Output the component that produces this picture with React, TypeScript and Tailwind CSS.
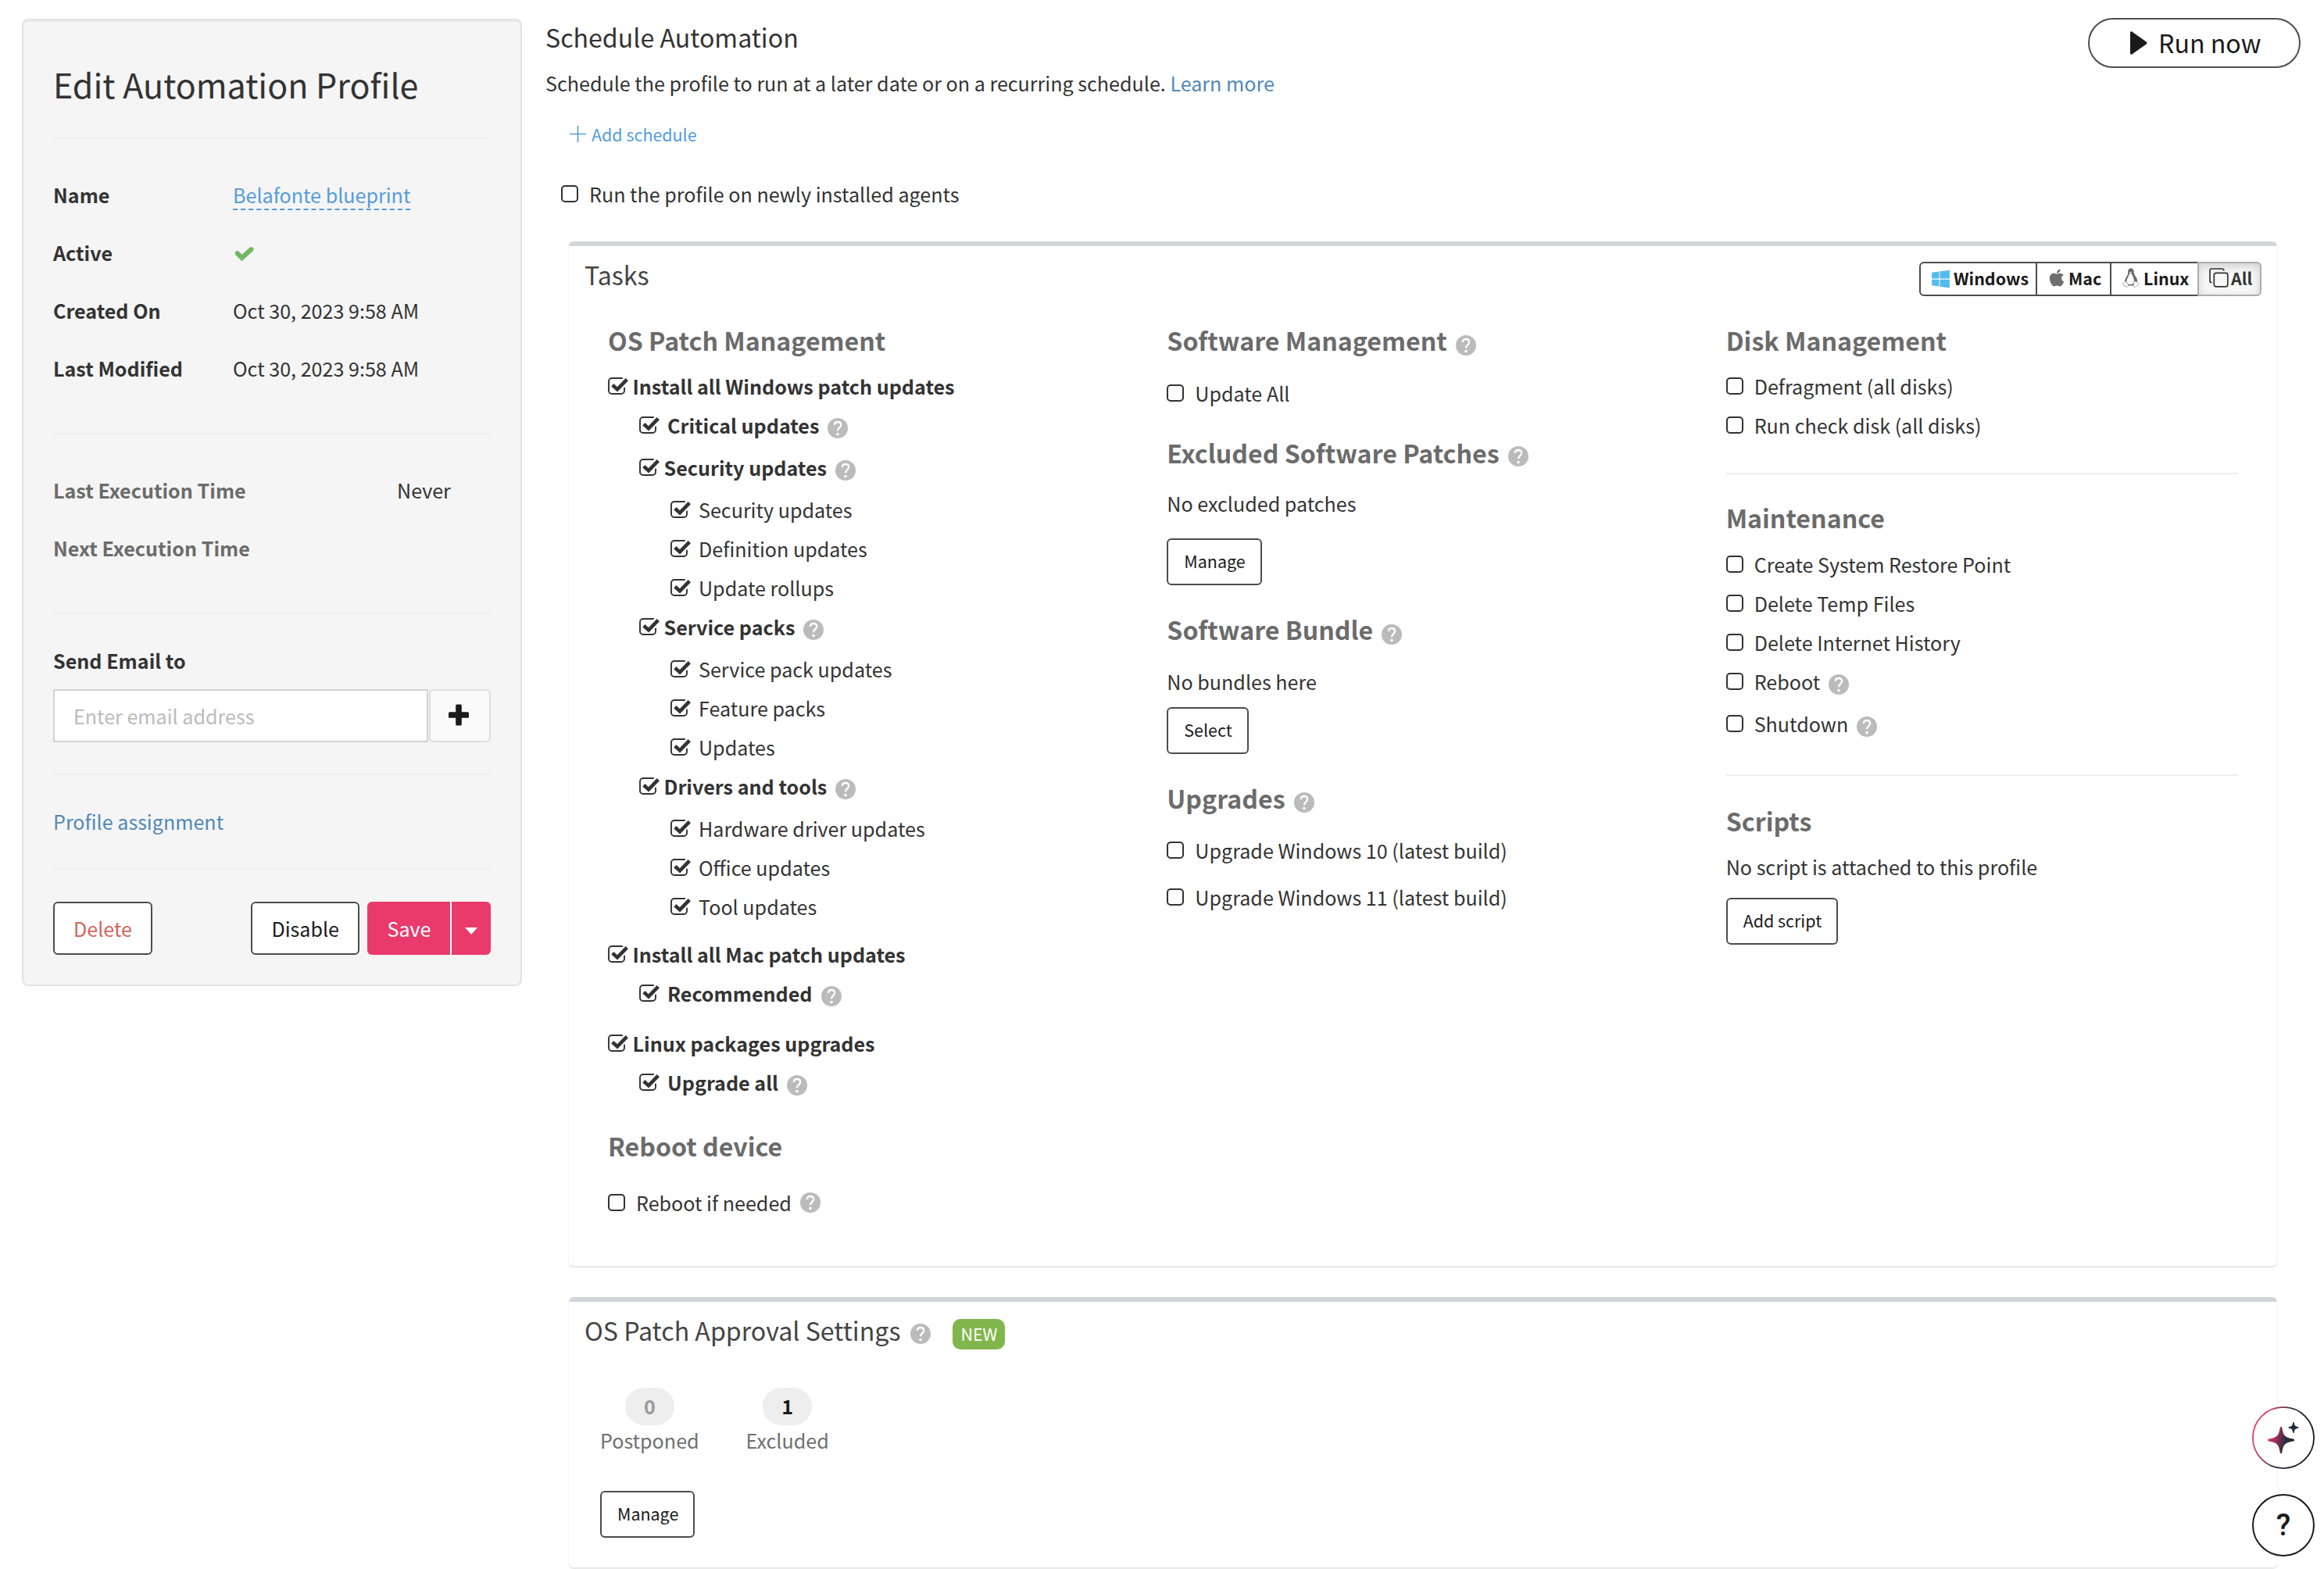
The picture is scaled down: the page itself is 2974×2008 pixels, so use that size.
import type { ReactNode } from 'react';
import { FaApple, FaWindows } from 'react-icons/fa';

function Help({ className = '' }: { className?: string }) {
  return (
    <svg viewBox="0 0 26 26" className={`ml-[11px] size-[26px] shrink-0 ${className}`} fill="none">
      <circle cx="13" cy="13" r="13" fill="#bbbbbb" />
      <path
        d="M8.9 8.9C8.9 6.1 10.5 5 12.9 5c2.700 0 4.300 1.400 4.300 3.700 0 3.300-4.200 3.600-4.200 7.600"
        stroke="#fff"
        strokeWidth="2.300"
      />
      <circle cx="13" cy="20.600" r="1.800" fill="#fff" />
    </svg>
  );
}

function Box({ checked = false }: { checked?: boolean }) {
  if (!checked) {
    return <span className="size-[22px] shrink-0 rounded-[5px] border-2 border-[#333]" />;
  }
  return (
    <span className="h-[22px] w-[22px] shrink-0">
      <svg viewBox="0 0 27 22" className="h-[22px] w-[27px] max-w-none" fill="none" stroke="#333">
        <path
          d="M18.800 1H5a4 4 0 0 0-4 4v12a4 4 0 0 0 4 4h12a4 4 0 0 0 4-4v-4.200"
          strokeWidth="1.900"
        />
        <path d="M5.800 9.700 12 15.400 24.300 2.600" strokeWidth="4.600" />
      </svg>
    </span>
  );
}

type ItemProps = {
  label: string;
  checked?: boolean;
  bold?: boolean;
  tight?: boolean;
  help?: boolean;
  level?: 0 | 1 | 2;
};

const indents = ['pl-0', 'pl-10', 'pl-20'];

function Item({ label, checked, bold, tight, help, level = 0 }: ItemProps) {
  return (
    <label className={`flex items-center ${indents[level]} ${help ? 'h-[54px] pb-1' : 'h-[50px]'}`}>
      <Box checked={checked} />
      <span className={`${tight ? 'ml-[9.500px]' : 'ml-3.5'} ${bold ? 'font-bold' : ''}`}>{label}</span>
      {help && <Help className="translate-y-1" />}
    </label>
  );
}

function Heading({ children, help = '' }: { children: ReactNode; help?: string }) {
  return (
    <h3 className="flex h-10 items-center text-[32.150px] font-bold leading-10 text-[#6b6b6b]">
      {children}
      {help && <Help className={help} />}
    </h3>
  );
}

function SmallButton({ children, className = '' }: { children: ReactNode; className?: string }) {
  return (
    <button
      className={`flex h-[60px] w-fit items-center rounded-md border-2 border-[#4d4d4d] bg-white pb-0.5 pl-5 pr-[19px] text-[21.450px] leading-8 text-[#1a1a1a] ${className}`}
    >
      {children}
    </button>
  );
}

function Rule({ className = '' }: { className?: string }) {
  return <hr className={`h-0.5 border-0 bg-[#eeeeee] ${className}`} />;
}

function Tux() {
  return (
    <svg viewBox="0 0 22 25" className="h-[25px] w-[22px]" fill="none">
      <path
        d="M10.800.8c-2.300 0-3.300 1.700-3.200 4 .1 2.600-.2 3.700-1.500 5.700-1.500 2.300-2.600 4.500-2.600 7.300l3.600 4.200h7.400l4-4.200c.3-2.600-.4-4.600-1.900-6.700-1.500-2.100-2.300-3.100-2.300-5.900 0-2.800-1.200-4.400-3.500-4.400Z"
        fill="#6b6b6b"
        stroke="#555"
        strokeWidth=".8"
      />
      <path
        d="M10.400 6.800c-1.200.3-1.900 1.400-2.200 2.700-.6 2-2.300 3.900-2.700 6.500-.3 2.200.9 4.900 4.900 5.100 3.200.1 4.600-2.200 4.500-5.100-.1-2.600-1.300-4.500-2.100-6.500-.5-1.300-1-2.500-2.400-2.700Z"
        fill="#fff"
      />
      <path d="M8.900 5.400c.9-.8 2.400-.8 3.300 0-.4 1-2.700 1.200-3.300 0Z" fill="#fff" />
      <path
        d="M3.500 17.300c-.6 1.200-2.600 1.200-2.600 2.400 0 .9.600 1.300.2 2.300-.2 1.100 2.900 1 4.200 1.900 1.300.6 2.600-.4 2.400-1.700-.3-1.700-2.700-5-4.200-4.900ZM16.200 17.100c-1.100 0-1.700.8-1.700 2.200 0 1.700-.6 3-.2 4.300.6 1.100 2.300.8 3.300-.2 1.100-1.100 3.400-1.300 3.500-2.300 0-.8-1.200-1.100-1.400-2.200-.4-1.300-2-.9-3.500-1.800Z"
        fill="#fff"
        stroke="#9a9a9a"
        strokeWidth=".8"
      />
    </svg>
  );
}

function CopyIcon() {
  return (
    <svg viewBox="0 0 25 25" className="h-[25px] w-[25px]" fill="none" stroke="#333" strokeWidth="1.700">
      <rect x="6.300" y="6.300" width="17.500" height="17.500" rx="2.500" />
      <path d="M18.700 3.500V3a2 2 0 0 0-2-2H3a2 2 0 0 0-2 2v13.500a2 2 0 0 0 2 2h.6" />
    </svg>
  );
}

function PlatformFilter() {
  const base = 'flex items-center border-y-2 border-[#4d4d4d] pb-[3px]';
  return (
    <div className="flex h-[44px] text-[21.450px] font-bold leading-8 text-[#1a1a1a]">
      <div className={`${base} w-[151px] rounded-l-md border-x-2 pl-[14px]`}>
        <FaWindows className="mt-0.5 h-[26px] w-[23px]" color="#55bbeb" />
        <span className="ml-[5px]">Windows</span>
      </div>
      <div className={`${base} w-[95px] border-r-2 pl-[15px]`}>
        <FaApple className="h-[25px] w-[20px]" color="#6e6e6e" />
        <span className="ml-[5px]">Mac</span>
      </div>
      <div className={`${base} w-[110px] pl-3.5`}>
        <Tux />
        <span className="ml-[5px]">Linux</span>
      </div>
      <div className="flex w-[82px] items-center rounded-r-md border-2 border-[#adadad] bg-[#f7f7f7] pb-[3px] pl-[13px] text-[#333] shadow-[inset_0_4px_12px_rgba(0,0,0,0.16)]">
        <CopyIcon />
        <span className="ml-[3px]">All</span>
      </div>
    </div>
  );
}

function InfoRow({ label, children }: { label: string; children: ReactNode }) {
  return (
    <div className="flex h-[74px] items-center">
      <span className="w-[230px] font-bold">{label}</span>
      {children}
    </div>
  );
}

function Sidebar() {
  return (
    <aside className="ml-7 mt-6 h-[1238px] w-[640px] shrink-0 rounded-lg border-2 border-[#e3e3e3] bg-[#f5f5f5] px-[38px] pt-[50px] shadow-[inset_0_2px_2px_rgba(0,0,0,0.05)]">
      <h1 className="translate-y-px text-[43px] leading-[60px]">Edit Automation Profile</h1>
      <Rule className="mb-[34px] mt-10" />
      <InfoRow label="Name">
        <span className="mt-[3px] border-b-2 border-dashed border-[#559bdc] leading-[35px] text-[#559bdc]">
          Belafonte blueprint
        </span>
      </InfoRow>
      <InfoRow label="Active">
        <svg viewBox="0 0 26 20" className="ml-0.5 mt-[3px] h-5 w-[26px]" fill="none">
          <path d="M3.300 8.700 9.600 15 22 3.600" stroke="#76b767" strokeWidth="6.200" />
          <path d="M3.300 8.700 9.600 15 22 3.600" stroke="#76b767" strokeWidth="5" strokeLinecap="round" />
        </svg>
      </InfoRow>
      <InfoRow label="Created On">Oct 30, 2023 9:58 AM</InfoRow>
      <InfoRow label="Last Modified">Oct 30, 2023 9:58 AM</InfoRow>
      <Rule className="mb-[34px] mt-[46px]" />
      <div className="flex h-[74px] items-center">
        <span className="w-[440px] font-bold text-[#6b6b6b]">Last Execution Time</span>
        Never
      </div>
      <div className="flex h-[74px] items-center font-bold text-[#6b6b6b]">Next Execution Time</div>
      <Rule className="mb-[39px] mt-[46px]" />
      <div className="font-bold leading-10">Send Email to</div>
      <div className="mt-[17px] flex h-[68px] gap-px">
        <input
          className="w-[480px] border-2 border-[#d2d2da] bg-white pl-6 pr-5 placeholder:text-[#bbbbbb]"
          placeholder="Enter email address"
        />
        <button className="flex flex-1 items-center justify-center rounded-md border-2 border-[#dddddd] bg-[#fafafa] pb-0.5 pr-1">
          <svg viewBox="0 0 26 27" className="h-[28px] w-[26px]" fill="#1a1a1a">
            <rect x="0" y="9.700" width="26" height="7.600" rx="1.500" />
            <rect x="9.200" y="0" width="7.600" height="27" rx="1.500" />
          </svg>
        </button>
      </div>
      <Rule className="mb-[39px] mt-10" />
      <div className="leading-10 text-[#5188b8]">Profile assignment</div>
      <Rule className="mb-[41px] mt-10" />
      <div className="flex h-[68px]">
        <button className="mr-auto rounded-md border-2 border-[#4d4d4d] bg-white px-6 pb-px text-[#d4645c]">
          Delete
        </button>
        <button className="mr-2.5 rounded-md border-2 border-[#4d4d4d] bg-white px-6 pb-px text-[#1a1a1a]">
          Disable
        </button>
        <button className="w-[106px] rounded-l-md bg-[#ea3a6c] pb-px pl-px text-white">Save</button>
        <button className="ml-[2px] flex w-[50px] items-center justify-center rounded-r-md bg-[#ea3a6c] shadow-[-2px_0_0_#fff]">
          <svg viewBox="0 0 16 9" className="mt-1.5 h-[9px] w-4" fill="#fff">
            <path d="M0 0h16L8 9z" />
          </svg>
        </button>
      </div>
    </aside>
  );
}

function PatchColumn() {
  return (
    <div className="px-[30px]">
      <Heading>OS Patch Management</Heading>
      <div className="mt-3.5">
        <Item checked bold tight label="Install all Windows patch updates" />
        <Item checked bold help level={1} label="Critical updates" />
        <Item checked bold tight help level={1} label="Security updates" />
        <Item checked level={2} label="Security updates" />
        <Item checked level={2} label="Definition updates" />
        <Item checked level={2} label="Update rollups" />
        <Item checked bold tight help level={1} label="Service packs" />
        <Item checked level={2} label="Service pack updates" />
        <Item checked level={2} label="Feature packs" />
        <Item checked level={2} label="Updates" />
        <Item checked bold tight help level={1} label="Drivers and tools" />
        <Item checked level={2} label="Hardware driver updates" />
        <Item checked level={2} label="Office updates" />
        <Item checked level={2} label="Tool updates" />
      </div>
      <div className="mt-[11px]">
        <Item checked bold tight label="Install all Mac patch updates" />
        <Item checked bold help level={1} label="Recommended" />
      </div>
      <div className="mt-2.5">
        <Item checked bold tight label="Linux packages upgrades" />
        <Item checked bold help level={1} label="Upgrade all" />
      </div>
      <div className="mt-8">
        <Heading>Reboot device</Heading>
      </div>
      <label className="mt-7 flex h-[50px] items-center">
        <Box />
        <span className="ml-3.5">Reboot if needed</span>
        <Help />
      </label>
    </div>
  );
}

function SoftwareColumn() {
  return (
    <div className="px-[30px]">
      <Heading help="translate-y-[7px]">Software Management</Heading>
      <div className="mt-[23px]">
        <Item label="Update All" />
      </div>
      <div className="mt-[31px]">
        <Heading help="translate-y-[5px]">Excluded Software Patches</Heading>
      </div>
      <div className="mt-[25px] leading-10">No excluded patches</div>
      <SmallButton className="mt-[25px]">Manage</SmallButton>
      <div className="mt-9">
        <Heading help="translate-y-[7px]">Software Bundle</Heading>
      </div>
      <div className="mt-[27px] leading-10">No bundles here</div>
      <SmallButton className="mt-[13px]">Select</SmallButton>
      <div className="mt-9">
        <Heading help="translate-y-[6px]">Upgrades</Heading>
      </div>
      <div className="mt-[22px] flex flex-col gap-2.5">
        <Item label="Upgrade Windows 10 (latest build)" />
        <Item label="Upgrade Windows 11 (latest build)" />
      </div>
    </div>
  );
}

function SystemColumn() {
  return (
    <div className="px-[30px]">
      <Heading>Disk Management</Heading>
      <div className="mt-3.5">
        <Item label="Defragment (all disks)" />
        <Item label="Run check disk (all disks)" />
      </div>
      <Rule className="mb-[35px] mt-9" />
      <Heading>Maintenance</Heading>
      <div className="mt-[15px]">
        <Item label="Create System Restore Point" />
        <Item label="Delete Temp Files" />
        <Item label="Delete Internet History" />
        <Item help label="Reboot" />
        <Item help label="Shutdown" />
      </div>
      <Rule className="mb-[37px] mt-9" />
      <Heading>Scripts</Heading>
      <div className="mt-[19px] leading-10">No script is attached to this profile</div>
      <SmallButton className="mt-5">Add script</SmallButton>
    </div>
  );
}

const panel =
  'ml-[30px] w-[2186px] rounded-md border-t-[6px] bg-white shadow-[0_2px_2px_rgba(0,0,0,0.1),0_0_2px_rgba(0,0,0,0.06)]';

function Counter({ value, label, muted }: { value: string; label: string; muted?: boolean }) {
  return (
    <div className="flex flex-col items-center">
      <span
        className={`flex h-12 w-[63px] items-center justify-center rounded-full bg-[#eeeeee] pb-0.5 font-bold ${
          muted ? 'text-[#999]' : 'text-[#1a1a1a]'
        }`}
      >
        {value}
      </span>
      <span className="-mt-px leading-10 text-[#6f6f6f]">{label}</span>
    </div>
  );
}

function FloatingButtons() {
  return (
    <div className="fixed bottom-4 right-3 flex flex-col gap-8">
      <svg viewBox="0 0 80 80" className="size-20" fill="none">
        <defs>
          <linearGradient id="ring" x1="0" y1=".35" x2="1" y2=".65">
            <stop offset="0" stopColor="#ee3d70" />
            <stop offset=".25" stopColor="#b33a62" />
            <stop offset=".5" stopColor="#2b3345" />
            <stop offset=".85" stopColor="#1a1a1a" />
          </linearGradient>
          <linearGradient id="spark" x1="0" y1=".4" x2="1" y2=".6">
            <stop offset="0" stopColor="#e03a6b" />
            <stop offset=".4" stopColor="#8a2c50" />
            <stop offset=".65" stopColor="#27303f" />
            <stop offset="1" stopColor="#1f2a38" />
          </linearGradient>
        </defs>
        <circle cx="40" cy="40" r="39.100" fill="#fff" stroke="url(#ring)" strokeWidth="1.800" />
        <path
          d="M37 26c.9 0 1.100.6 1.300 1.600 1.700 9.600 3.300 12.200 14.400 14 .9.200 1.300.5 1.300 1.400s-.4 1.200-1.300 1.400c-11.100 1.800-12.700 4.400-14.400 14-.2 1-.4 1.600-1.300 1.600s-1.100-.6-1.300-1.600c-1.700-9.600-3.300-12.200-14.400-14C20.400 44.200 20 43.900 20 43s.4-1.200 1.300-1.400c11.100-1.800 12.700-4.400 14.400-14 .2-1 .4-1.600 1.300-1.600Z"
          fill="url(#spark)"
        />
        <path
          d="M53 20c.5 0 .7.500.8 1.100.7 3.600 1.300 4.300 5 5.100.6.100 1 .300 1 .800s-.4.700-1 .8c-3.700.8-4.300 1.500-5 5.100-.1.600-.3 1.100-.8 1.100s-.7-.5-.8-1.100c-.7-3.600-1.300-4.300-5-5.100-.6-.1-1-.3-1-.8s.4-.7 1-.8c3.700-.8 4.300-1.500 5-5.100.1-.6.3-1.100.8-1.100Z"
          fill="#1f2d3a"
        />
      </svg>
      <button className="flex size-20 items-center justify-center rounded-full border-2 border-[#1a1a1a] bg-white font-[Roboto] text-[38px] font-medium leading-none text-[#1a1a1a]">
        ?
      </button>
    </div>
  );
}

export default function App() {
  return (
    <div className="flex h-[2008px] w-[2974px] overflow-hidden bg-white font-['Noto_Sans_CJK_SC',sans-serif] text-[25.100px] leading-9 text-[#333]">
      <Sidebar />
      <main className="ml-[30px] w-[2246px]">
        <header className="flex justify-between">
          <div className="pt-[27px]">
            <h2 className="text-[32.150px] leading-10">Schedule Automation</h2>
            <p className="mt-[19px] leading-10">
              Schedule the profile to run at a later date or on a recurring schedule.{' '}
              <a className="text-[#5188b8]">Learn more</a>
            </p>
            <div className="ml-[31px] mt-[29px] flex h-8 items-center text-[21.450px] leading-8 text-[#559bdc]">
              <svg viewBox="0 0 21 21" className="size-[21px]" stroke="currentColor" strokeWidth="1.600">
                <path d="M10.500 0v21M0 10.500h21" />
              </svg>
              <span className="ml-[7px] translate-y-px">Add schedule</span>
            </div>
            <label className="ml-5 mt-[41px] flex h-10 items-center">
              <Box />
              <span className="ml-3.5">Run the profile on newly installed agents</span>
            </label>
          </div>
          <button className="mt-[23px] flex h-16 w-[272px] items-center rounded-full border-2 border-[#4d4d4d] bg-white pb-[3px] pl-[52px] text-[32.150px] leading-10 text-[#1a1a1a]">
            <svg viewBox="0 0 22 30" className="mt-[3px] h-[30px] w-[22px]" fill="#1a1a1a">
              <path d="M0 2C0 .4 1.300-.1 2.600.8l18 12.700c1.200.9 1.200 2.100 0 3l-18 12.700C1.300 30.100 0 29.600 0 28z" />
            </svg>
            <span className="ml-3.5">Run now</span>
          </button>
        </header>

        <section className={`${panel} mt-[41px] h-[1311px] border-[#d2d6da] px-5`}>
          <div className="flex h-[100px] items-start justify-between">
            <h2 className="mt-4 text-[32.150px] leading-10 text-[#444]">Tasks</h2>
            <div className="mt-5">
              <PlatformFilter />
            </div>
          </div>
          <div className="grid grid-cols-3">
            <PatchColumn />
            <SoftwareColumn />
            <SystemColumn />
          </div>
        </section>

        <section className={`${panel} mt-10 h-[346px] border-[#d3d4db] px-5 pt-4`}>
          <h2 className="flex items-center text-[32.150px] leading-10 text-[#444]">
            OS Patch Approval Settings
            <Help className="ml-[13px] translate-y-[5px]" />
            <span className="ml-7 h-[39px] translate-y-[5px] rounded-[10px] bg-[#81b64c] px-[10px] text-[21.450px] leading-[37px] text-white">
              NEW
            </span>
          </h2>
          <div className="ml-5 mt-[54px] flex gap-[60px]">
            <Counter muted value="0" label="Postponed" />
            <Counter value="1" label="Excluded" />
          </div>
          <SmallButton className="ml-5 mt-[45px]">Manage</SmallButton>
        </section>
      </main>
      <FloatingButtons />
    </div>
  );
}
